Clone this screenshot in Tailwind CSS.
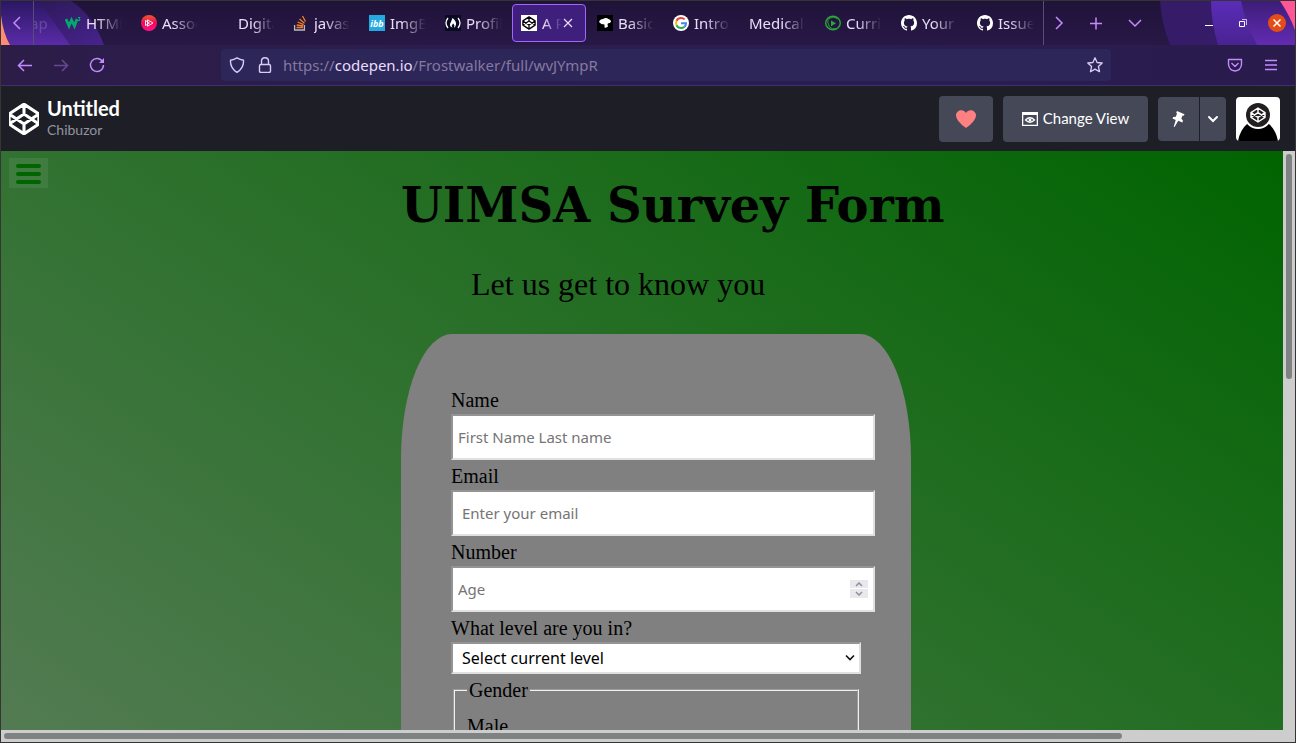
<!DOCTYPE html>
<html lang="en">
<head>
<meta charset="utf-8">
<title>UIMSA Survey Form</title>
<script src="https://cdn.jsdelivr.net/npm/@tailwindcss/browser@4"></script>
</head>
<body class="h-screen overflow-hidden bg-[#373534] p-px font-['Noto_Sans',sans-serif]">
<svg class="hidden" aria-hidden="true">
  <symbol id="codepen" viewBox="0 0 32 32"><path d="M16 2 30 11.2v9.6L16 30 2 20.800v-9.600zM16 2v9.200M16 20.800V30M2 11.200l14 9.600 14-9.600M2 20.800l14-9.600 14 9.600" fill="none" stroke="currentColor" stroke-width="2.900" stroke-linejoin="round"/></symbol>
  <symbol id="github" viewBox="0 0 16 16"><path fill="currentColor" d="M8 0C3.580 0 0 3.580 0 8c0 3.540 2.290 6.530 5.470 7.590.4.070.55-.17.55-.38 0-.19-.01-.82-.01-1.490-2.010.37-2.530-.49-2.690-.94-.09-.23-.48-.94-.82-1.130-.28-.15-.68-.52-.01-.53.63-.01 1.080.58 1.230.82.72 1.210 1.870.87 2.330.66.070-.52.28-.87.510-1.070-1.780-.2-3.640-.89-3.640-3.950 0-.87.310-1.590.82-2.150-.08-.2-.36-1.020.08-2.120 0 0 .67-.21 2.200.82.64-.18 1.320-.27 2-.27s1.360.09 2 .27c1.530-1.040 2.200-.82 2.200-.82.44 1.100.16 1.920.08 2.120.51.56.82 1.270.82 2.150 0 3.070-1.870 3.750-3.650 3.950.29.25.54.73.54 1.480 0 1.070-.01 1.930-.01 2.200 0 .21.15.46.55.38A8.010 8.010 0 0 0 16 8c0-4.420-3.580-8-8-8z"/></symbol>
</svg>
<div class="flex h-full flex-col overflow-hidden">

  <!-- Browser chrome -->
  <div class="relative h-[84px] shrink-0 bg-[#23163f] text-[#c48bff]">
    <div class="absolute inset-x-0 top-0 h-11 overflow-hidden bg-linear-to-b from-[#201339] to-[#271846]">
      <svg class="absolute left-0 top-0" width="160" height="44" viewBox="1 1 160 44">
        <defs>
          <linearGradient id="la" x1="0" y1="0" x2="0" y2="1"><stop offset="0" stop-color="#2a1763"/><stop offset="1" stop-color="#5b2ba8"/></linearGradient>
          <linearGradient id="lb" x1="0" y1="0" x2="1" y2="1"><stop offset="0" stop-color="#28174e"/><stop offset="1" stop-color="#47238d"/></linearGradient>
        </defs>
        <path d="M1 1H71Q93 15 104 45H1z" fill="url(#lb)"/>
        <path d="M1 1H39L70 45H1z" fill="url(#la)"/>
        <path d="M1 15Q3 33 10 45H1z" fill="#ff8c72"/>
      </svg>
      <svg class="absolute right-0 top-0" width="140" height="44" viewBox="1155 1 140 44">
        <defs>
          <linearGradient id="ra" x1="0" y1="0" x2="0" y2="1"><stop offset="0" stop-color="#5a2cb8"/><stop offset="1" stop-color="#4a2391"/></linearGradient>
          <linearGradient id="rb" x1="0" y1="0" x2="0" y2="1"><stop offset="0" stop-color="#3d1d78"/><stop offset="1" stop-color="#622bb2"/></linearGradient>
        </defs>
        <path d="M1160 1H1295V45H1170Q1161 22 1160 1z" fill="#361b68"/>
        <path d="M1211 1H1260V45H1218Q1211 22 1211 1z" fill="url(#ra)"/>
        <path d="M1241 1H1295V45H1257Q1245 22 1241 1z" fill="url(#rb)"/>
        <path d="M1280 1H1295V30Q1290 16 1280 1z" fill="#ff5795"/>
      </svg>
    </div>
    <div class="relative flex h-11 text-[15px] text-[#e9defa]">
      <button aria-label="Scroll tabs left" class="flex w-8 shrink-0 items-center justify-center text-[#c48bff]"><svg width="16" height="16" fill="none" stroke="currentColor" stroke-width="1.500" viewBox="0 0 16 16"><path d="M11 2 5 8l6 6"/></svg></button>
      <div class="flex min-w-0 flex-1 items-center overflow-hidden border-x border-[#5b4a7c]">
        <span class="w-[21px] shrink-0 overflow-hidden opacity-20"><span class="-ml-1">ap</span></span>
        <a href="#" class="flex w-[76px] shrink-0 items-center gap-[5px] pl-[10px]"><svg class="shrink-0" width="16" height="16" viewBox="0 0 16 16" fill="none" stroke="#04aa6d"><path stroke-width="2.800" d="m1 4 3 7L6.500 5l3 6 2.500-7"/><path stroke-width="1" d="M13 2.500h2l-1 1.500q1.500 0 1 1.200-1 .8-2 .1"/></svg><span class="w-9 overflow-hidden mask-r-from-30%">HTML</span></a>
        <a href="#" class="flex w-[76px] shrink-0 items-center gap-[5px] pl-[10px]"><svg class="shrink-0" width="16" height="16" viewBox="0 0 16 16"><defs><linearGradient id="ps" x1="0" y1="0" x2="0" y2="1"><stop stop-color="#f05a28"/><stop offset=".5" stop-color="#f10a5c"/><stop offset="1" stop-color="#ff1285"/></linearGradient></defs><circle cx="8" cy="8" r="8" fill="url(#ps)"/><path d="M6.500 4.800 12 8l-5.500 3.200zM4.500 5.500v5l4-2.500z" fill="none" stroke="#fff" stroke-width=".9"/></svg><span class="w-9 overflow-hidden mask-r-from-30%">Assoc</span></a>
        <a href="#" class="flex w-[76px] shrink-0 items-center pl-[31px]"><span class="w-9 overflow-hidden mask-r-from-40%">Digital</span></a>
        <a href="#" class="flex w-[76px] shrink-0 items-center gap-[5px] pl-[10px]"><svg class="shrink-0" width="16" height="16" viewBox="0 0 16 16" fill="none"><path stroke="#bcbbbb" stroke-width="1.300" d="M1.600 10v5h9.800v-5"/><path stroke="#f48024" stroke-width="1.300" d="M3.500 12.500h6.500M3.700 10l6.400 1M4.600 7l6 2.700M6.500 4l5 4.200M9.500 1l3 5.500"/></svg><span class="w-9 overflow-hidden mask-r-from-30%">javasc</span></a>
        <a href="#" class="flex w-[76px] shrink-0 items-center gap-[5px] pl-[10px]"><svg class="shrink-0" width="16" height="16" viewBox="0 0 16 16"><rect width="16" height="16" fill="#23a8e0"/><text x="8" y="12" text-anchor="middle" font-family="Open Sans" font-weight="700" font-style="italic" font-size="9" fill="#fff">ibb</text></svg><span class="w-9 overflow-hidden mask-r-from-30%">ImgBB</span></a>
        <a href="#" class="flex w-[76px] shrink-0 items-center gap-[5px] pl-[10px]"><svg class="shrink-0" width="16" height="16" viewBox="0 0 16 16"><rect width="16" height="16" fill="#0a0a23"/><path d="M3 3Q-1 8 3 13M13 3q4 5 0 10" fill="none" stroke="#fff" stroke-width="1.300"/><path d="M7.500 3q4 3 3.500 6.500Q10.500 12 9 12.500q1-3-1-4-2 2-.5 4-3-1-2.500-3.500Q6 7 7.500 3z" fill="#fff"/></svg><span class="w-9 overflow-hidden mask-r-from-30%">Profile</span></a>
        <a href="#" aria-current="page" class="mx-px flex h-[38px] w-[74px] shrink-0 items-center gap-[5px] rounded border border-[#a465ff] bg-[#3e1f7c] pl-2"><svg class="shrink-0 bg-white text-black" width="16" height="16"><use href="#codepen" x="1" y="1" width="14" height="14"/></svg><span class="w-5 overflow-hidden whitespace-nowrap mask-r-from-10%">A Pen</span><svg class="-ml-1 shrink-0" width="10" height="10" viewBox="0 0 10 10" stroke="#e9defa" stroke-width="1.200"><path d="m1 1 8 8M9 1 1 9"/></svg></a>
        <a href="#" class="flex w-[76px] shrink-0 items-center gap-[5px] pl-[10px]"><svg class="shrink-0" width="16" height="16" viewBox="0 0 16 16"><rect width="16" height="16"/><path d="M2 7Q3 4 6 4q3-2 5.500 0Q14 4.500 14 6.500q-.5 2-3 1.700-1 1 0 3.300-1.500 1.500-3.500 1V9.500Q4 9.500 2 7z" fill="#fff"/></svg><span class="w-9 overflow-hidden mask-r-from-30%">Basic</span></a>
        <a href="#" class="flex w-[76px] shrink-0 items-center gap-[5px] pl-[10px]"><svg class="shrink-0" width="16" height="16" viewBox="0 0 16 16"><circle cx="8" cy="8" r="8" fill="#fff"/><g fill="none" stroke-width="2"><path stroke="#ea4335" d="M3.500 5.800Q5 3 8 3q2.300 0 3.700 1.400"/><path stroke="#fbbc05" d="M3.500 5.800q-1 2.200 0 4.400"/><path stroke="#34a853" d="M3.500 10.200Q5 13 8 13q2 0 3.500-1.300"/><path stroke="#4285f4" d="M8 8.200h5q0 2.300-1.500 3.500"/></g></svg><span class="w-9 overflow-hidden mask-r-from-30%">Introd</span></a>
        <a href="#" class="flex w-[76px] shrink-0 items-center pl-[10px]"><span class="w-14 overflow-hidden whitespace-nowrap mask-r-from-60%">Medical-s</span></a>
        <a href="#" class="flex w-[76px] shrink-0 items-center gap-[5px] pl-[10px]"><svg class="shrink-0" width="16" height="16" viewBox="0 0 16 16" fill="none" stroke="#28a835"><ellipse cx="8" cy="8" rx="7.300" ry="6.800" stroke-width="1.400"/><path d="M3 2.500Q2 8 4.500 12q3 3 7 1.500M4 4q4-3.500 8.500 0" stroke-width=".9"/><path d="m6 5.500 5 2.700-5 3z" fill="#28a835" stroke="none"/></svg><span class="w-9 overflow-hidden mask-r-from-30%">Curric</span></a>
        <a href="#" class="flex w-[76px] shrink-0 items-center gap-[5px] pl-[10px]"><svg class="shrink-0 text-white" width="16" height="16"><use href="#github"/></svg><span class="w-9 overflow-hidden mask-r-from-30%">Your</span></a>
        <a href="#" class="flex w-[76px] shrink-0 items-center gap-[5px] pl-[10px]"><svg class="shrink-0 text-white" width="16" height="16"><use href="#github"/></svg><span class="w-9 overflow-hidden mask-r-from-30%">Issues</span></a>
      </div>
      <div class="flex w-[251px] shrink-0 items-center text-[#c48bff]">
        <button aria-label="Scroll tabs right" class="ml-[7px]"><svg width="16" height="16" fill="none" stroke="currentColor" stroke-width="1.500" viewBox="0 0 16 16"><path d="m5 2 6 6-6 6"/></svg></button>
        <button aria-label="New tab" class="ml-5"><svg width="18" height="16" fill="none" stroke="currentColor" stroke-width="1.500" viewBox="0 0 18 16"><path d="M9 2.500v12M3 8.500h12"/></svg></button>
        <button aria-label="List all tabs" class="ml-[22px]"><svg width="16" height="16" fill="none" stroke="currentColor" stroke-width="1.500" viewBox="0 0 16 16"><path d="m2 5 6 6 6-6"/></svg></button>
        <button aria-label="Minimize" class="ml-[60px] text-white"><svg width="12" height="12" viewBox="0 0 12 12"><path fill="currentColor" d="M2 8h8v1H2z"/></svg></button>
        <button aria-label="Restore" class="ml-[22px] text-white"><svg width="12" height="12" viewBox="0 0 12 12" fill="none" stroke="currentColor"><path d="M2.500 4.500h5v5h-5z"/><path opacity=".7" d="M5 2.500h4.500V8"/></svg></button>
        <button aria-label="Close window" class="ml-[19px] flex size-[18px] items-center justify-center rounded-full bg-[#e44e16] text-white"><svg width="10" height="10" viewBox="0 0 10 10" stroke="currentColor" stroke-width="1.500"><path d="m1.500 1.500 7 7M8.500 1.500l-7 7"/></svg></button>
      </div>
    </div>
    <div class="relative flex h-10 items-center bg-linear-to-r from-[#2c1c48] via-[#2a1e50] to-[#2a1b4d] pl-[15px] pr-4">
      <div class="flex w-[205px] shrink-0 gap-[18px]">
        <button aria-label="Back"><svg width="18" height="18" viewBox="0 0 18 18" fill="none" stroke="currentColor" stroke-width="1.500"><path d="M16 9.500H2.500M8 4 2.500 9.500 8 15"/></svg></button>
        <button aria-label="Forward" class="opacity-40"><svg width="18" height="18" viewBox="0 0 18 18" fill="none" stroke="currentColor" stroke-width="1.500"><path d="M2 9.500h13.500M10 4l5.500 5.500L10 15"/></svg></button>
        <button aria-label="Reload"><svg width="18" height="18" viewBox="0 0 18 18" fill="none" stroke="currentColor" stroke-width="1.500"><path d="M14.500 5.500A6.500 6.500 0 1 0 15.500 9"/><path d="M16 2v5h-5z" fill="currentColor" stroke="none"/></svg></button>
      </div>
      <div class="flex h-8 min-w-0 flex-1 items-center rounded bg-[#2d2659] px-2 text-[#dccdf5]">
        <svg class="shrink-0" width="16" height="16" viewBox="0 0 16 16" fill="none" stroke="currentColor" stroke-width="1.400"><path d="M8 .8q3 1.900 6.500 2.400Q15 11 8 15.300 1 11 1.500 3.200 5 2.700 8 .8z" stroke-linejoin="round"/></svg>
        <svg class="ml-3 shrink-0" width="16" height="16" viewBox="0 0 16 16" fill="none" stroke="currentColor" stroke-width="1.400"><rect x="2.500" y="7.500" width="11" height="8" rx="1.500"/><path d="M4.500 7.500V4q0-3.200 3.500-3.200T11.500 4v3.500"/></svg>
        <a href="#" class="ml-[10px] text-[15px] text-[#85799f]">https://<span class="text-[#e9defa]">codepen.io</span>/Frostwalker/full/wvJYmpR</a>
        <button aria-label="Bookmark this page" class="ml-auto"><svg width="16" height="16" viewBox="0 0 16 16" fill="none" stroke="currentColor" stroke-width="1.300" stroke-linejoin="round"><path d="m8 .8 2.100 4.700 5.100.5-3.800 3.500 1.100 5.200L8 12.100l-4.500 2.600 1.100-5.200L.8 6l5.100-.5z"/></svg></button>
      </div>
      <button aria-label="Save to Pocket" class="ml-[116px]"><svg width="16" height="16" viewBox="0 0 16 16" fill="none" stroke="currentColor" stroke-width="1.400" stroke-linejoin="round"><path d="M1.500 2.500h13v5q-.8 6-6.500 6.500Q2.300 13.500 1.500 7.500zM4.500 6 8 9.500 11.500 6"/></svg></button>
      <button aria-label="Menu" class="ml-5"><svg width="16" height="16" viewBox="0 0 16 16" stroke="currentColor" stroke-width="1.300"><path d="M2 3.500h12M2 8h12M2 12.500h12"/></svg></button>
    </div>
  </div>
  <div class="h-px shrink-0 bg-[#403070]"></div>

  <!-- CodePen header -->
  <header class="flex h-[65px] shrink-0 items-center bg-[#1e1f26] pl-2 pr-[15px] font-[Lato,sans-serif] text-white">
    <svg class="shrink-0" width="30" height="32"><use href="#codepen" x="-2" y="-1" width="34" height="34"/></svg>
    <div class="mb-[2px] ml-2">
      <h2 class="text-xl leading-6 font-bold">Untitled</h2>
      <a href="#" class="block text-sm leading-5 text-[#9293a0]">Chibuzor</a>
    </div>
    <div class="ml-auto flex items-center gap-[10px]">
      <button aria-label="Love this pen" class="flex h-[46px] w-[54px] items-center justify-center rounded bg-[#444857] text-[#ff8080]"><svg width="20" height="18" viewBox="0 0 20 18" fill="currentColor"><path d="M10 18Q0 11 0 5.500C0 0 7.500-1.800 10 3c2.500-4.800 10-3 10 2.500Q20 11 10 18z"/></svg></button>
      <button class="flex h-[46px] w-[145px] items-center justify-center gap-[5px] rounded bg-[#444857] text-[15px]"><svg width="16" height="14" viewBox="0 0 16 14"><path fill="currentColor" fill-rule="evenodd" d="M0 0h16v14H0zM1.300 3v9.700h13.400V3z"/><path fill="none" stroke="currentColor" stroke-width="1.300" d="M3.500 8Q8 3.500 12.500 8 8 12.500 3.500 8z"/><circle cx="8" cy="8" r="1.500" fill="currentColor"/></svg>Change View</button>
      <div class="flex gap-px">
        <button aria-label="Pin" class="flex h-11 w-[41px] items-center justify-center rounded-l bg-[#444857]"><svg width="16" height="18" viewBox="0 0 16 18" fill="currentColor"><path d="m6 1 7.500 3.200-.7 1.500-1.200-.3-1.300 3.200 1.700 2.200-.7 1.600-4-1.700L3.500 17l-.8-.3 2-6.700L1.500 8.500l.7-1.500 2.600-.3L6 3.500l-.8-.9z"/></svg></button>
        <button aria-label="More options" class="flex h-11 w-[26px] items-center justify-center rounded-r bg-[#444857]"><svg width="12" height="8" viewBox="0 0 12 8" fill="none" stroke="currentColor" stroke-width="2" stroke-linecap="round"><path d="m2 2 4 4 4-4"/></svg></button>
      </div>
      <button aria-label="Account" class="overflow-hidden rounded-sm bg-white"><svg class="text-white" width="44" height="44" viewBox="0 0 44 44"><path d="M2 44Q4 33 11 27h22q7 6 9 17z"/><circle cx="22" cy="18" r="14" fill="#fff"/><circle cx="22" cy="18" r="12" fill="#231f20"/><use href="#codepen" x="14" y="10" width="16" height="16"/></svg></button>
    </div>
  </header>

  <!-- Pen output -->
  <div class="flex min-h-0 flex-1">
    <main class="relative min-w-0 flex-1 overflow-hidden bg-[linear-gradient(34deg,#537b53,#006400)] pl-[400px] font-['Liberation_Serif',serif] text-black">
      <button aria-label="Open menu" class="absolute left-2 top-[7px] flex h-[30px] w-[39px] flex-col items-center justify-end gap-1 bg-[#407c3f] pb-1">
        <span class="h-1 w-[25px] rounded-full bg-[#006400]"></span>
        <span class="h-1 w-[25px] rounded-full bg-[#006400]"></span>
        <span class="h-1 w-[25px] rounded-full bg-[#006400]"></span>
      </button>
      <h1 class="pt-[25px] font-['DejaVu_Serif',serif] text-5xl leading-[58px] font-bold whitespace-nowrap">UIMSA Survey Form</h1>
      <p class="mt-8 pl-[70px] text-[32px] leading-9">Let us get to know you</p>
      <form class="mt-8 h-[1250px] w-[510px] rounded-t-[51px_125px] bg-[#808080] pl-[50px] pt-[54px] text-xl leading-6">
        <div class="mb-1 flex w-[424px] flex-col gap-[2px]">
          <label for="name">Name</label>
          <input id="name" type="text" placeholder="First Name Last name" class="h-[46px] border-2 border-t-[#949494] border-l-[#949494] border-r-[#e0e0e0] border-b-[#e0e0e0] bg-white px-[5px] font-['Noto_Sans',sans-serif] text-[15px] placeholder:text-[#757575]">
        </div>
        <div class="mb-1 flex w-[424px] flex-col gap-[2px]">
          <label for="email">Email</label>
          <input id="email" type="email" placeholder="Enter your email" class="h-[46px] border-2 border-t-[#949494] border-l-[#949494] border-r-[#e0e0e0] border-b-[#e0e0e0] bg-white px-[9px] font-['Noto_Sans',sans-serif] text-[15px] placeholder:text-[#757575]">
        </div>
        <div class="mb-1 flex w-[424px] flex-col gap-[2px]">
          <label for="age">Number</label>
          <div class="relative flex">
            <input id="age" type="number" placeholder="Age" class="h-[46px] w-full appearance-none border-2 border-t-[#949494] border-l-[#949494] border-r-[#e0e0e0] border-b-[#e0e0e0] bg-white px-[5px] font-['Noto_Sans',sans-serif] text-[15px] placeholder:text-[#757575]">
            <div class="absolute right-[7px] top-[14px] flex flex-col gap-px text-[#8f8f9d]">
              <button type="button" aria-label="Increase" class="flex h-2 w-[18px] items-center justify-center bg-[#e9e9ed]"><svg width="8" height="5" viewBox="0 0 8 5" fill="none" stroke="currentColor" stroke-width="1.500"><path d="m1 4 3-3 3 3"/></svg></button>
              <button type="button" aria-label="Decrease" class="flex h-[9px] w-[18px] items-center justify-center bg-[#e9e9ed]"><svg width="8" height="5" viewBox="0 0 8 5" fill="none" stroke="currentColor" stroke-width="1.500"><path d="m1 1 3 3 3-3"/></svg></button>
            </div>
          </div>
        </div>
        <div class="flex w-[410px] flex-col gap-[2px]">
          <label for="level">What level are you in?</label>
          <div class="relative flex">
            <select id="level" class="h-8 w-full appearance-none border-2 border-t-[#949494] border-l-[#949494] border-r-[#e0e0e0] border-b-[#e0e0e0] bg-white px-[9px] font-['Noto_Sans',sans-serif] text-base leading-6"><option>Select current level</option></select>
            <svg class="pointer-events-none absolute right-[6px] top-3" width="10" height="8" viewBox="0 0 10 8" fill="none" stroke="#111" stroke-width="1.600"><path d="m1 1.500 4 4 4-4"/></svg>
          </div>
        </div>
        <fieldset class="ml-[2px] mt-1 h-[300px] w-[406px] border-2 border-[#f0f0f0] px-3 [border-style:groove]">
          <legend class="px-[2px]">Gender</legend>
          <label for="male" class="mt-3 block">Male</label>
          <input id="male" type="radio" name="gender">
        </fieldset>
      </form>
    </main>
    <div class="w-3 shrink-0 bg-[#cdcdcd] pt-[3px]"><div class="mx-auto h-[39%] w-[6px] rounded-full bg-[#7f8282]"></div></div>
  </div>
  <div class="flex h-3 shrink-0 items-center bg-[#cdcdcd] pl-[3px]"><div class="h-[6px] w-[86.6%] rounded-full bg-[#7f8282]"></div></div>
</div>
</body>
</html>
